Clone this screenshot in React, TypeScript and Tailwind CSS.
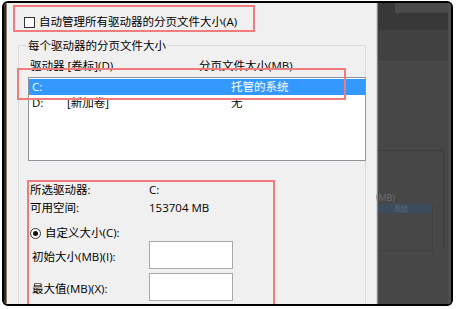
import React from "react";

// Windows "virtual memory" dialog, partly covered, with red callouts
const Checkbox: React.FC = () => (
    <span className="block w-[11px] h-[11px] shrink-0 border border-[#333333] bg-white" />
);

const Radio: React.FC = () => (
    <span className="flex items-center justify-center w-[11px] h-[11px] shrink-0 rounded-full border border-[#333333] bg-white">
        <span className="block w-[5px] h-[5px] rounded-full bg-[#111111]" />
    </span>
);

const DRIVES = [
    { letter: "C:", label: "", size: "托管的系统", selected: true },
    { letter: "D:", label: "[新加卷]", size: "无", selected: false },
];

export default function App() {
    return (
        <div className="w-[456px] h-[309px] bg-white pt-[1px] pl-[2px] overflow-hidden font-['Open_Sans','Noto_Sans_CJK_SC',sans-serif] text-[11.5px] leading-[16px] text-black">
            <div className="flex w-[451px] h-[305px] border-2 border-black rounded-[6px] overflow-hidden">
                {/* left edge of window behind */}
                <div className="w-[2px] shrink-0 bg-[#2b2b2b]" />
                <div className="w-[1px] shrink-0 bg-[#8c7f6a]" />

                {/* dialog panel */}
                <div className="relative w-[369px] shrink-0 bg-[#f0f0f0] overflow-hidden">
                    {/* auto manage checkbox */}
                    <div className="ml-[6px] mt-[2px] w-[242px] h-[27px] border-2 border-[#f27c7c] flex items-start pl-[9px] pt-[10px] gap-[4px]">
                        <Checkbox />
                        <span className="-mt-[3px] whitespace-nowrap">自动管理所有驱动器的分页文件大小(A)</span>
                    </div>

                    {/* group box */}
                    <div className="relative ml-[11px] mt-[13px] w-[348px] h-[300px] border border-[#dcdcdc]">
                        <span className="absolute -top-[8px] left-[8px] bg-[#f0f0f0] px-[1px] whitespace-nowrap">
                            每个驱动器的分页文件大小
                        </span>

                        {/* column header */}
                        <div className="flex pt-[12px] pl-[11px] whitespace-nowrap">
                            <span className="w-[169px] shrink-0">驱动器 [卷标](D)</span>
                            <span>分页文件大小(MB)</span>
                        </div>

                        {/* drive list */}
                        <div className="ml-[9px] -mr-[1px] mt-[3px] h-[84px] border border-[#8f949c] bg-white pt-[1px]">
                            {DRIVES.map((d) => (
                                <div
                                    key={d.letter}
                                    className={
                                        d.selected
                                            ? "flex h-[16px] pl-[3px] whitespace-nowrap bg-[#3399ff] text-white"
                                            : "flex h-[16px] pl-[3px] whitespace-nowrap"
                                    }
                                >
                                    <span className="w-[35px] shrink-0">{d.letter}</span>
                                    <span className="w-[164px] shrink-0">{d.label}</span>
                                    <span>{d.size}</span>
                                </div>
                            ))}
                        </div>

                        {/* selected drive details */}
                        <div className="ml-[8px] mt-[19px] w-[248px] h-[140px] border-2 border-[#f27c7c] pl-[1px]">
                            <div className="flex whitespace-nowrap">
                                <span className="w-[119px] shrink-0">所选驱动器:</span>
                                <span>C:</span>
                            </div>
                            <div className="flex mt-[2px] whitespace-nowrap">
                                <span className="w-[119px] shrink-0">可用空间:</span>
                                <span>153704 MB</span>
                            </div>
                            <div className="flex items-center gap-[4px] mt-[9px] whitespace-nowrap">
                                <Radio />
                                <span>自定义大小(C):</span>
                            </div>
                            <div className="flex items-center pl-[2px] whitespace-nowrap">
                                <span className="w-[117px] shrink-0 mt-[3px]">初始大小(MB)(I):</span>
                                <div className="w-[84px] h-[28px] border border-[#a9a9a9] bg-white" />
                            </div>
                            <div className="flex items-center pl-[2px] mt-[4px] whitespace-nowrap">
                                <span className="w-[117px] shrink-0 mt-[3px]">最大值(MB)(X):</span>
                                <div className="w-[84px] h-[28px] border border-[#a9a9a9] bg-white" />
                            </div>
                        </div>
                    </div>

                    {/* callout over the selected row */}
                    <div className="absolute left-[10px] top-[65px] w-[329px] h-[32px] border-2 border-[#f27c7c]" />
                </div>

                {/* divider */}
                <div className="w-[1px] shrink-0 bg-[#d6d6d6]" />
                <div className="w-[1px] shrink-0 bg-[#8f8a80]" />

                {/* dimmed background window */}
                <div className="flex-1 flex bg-[#474747]">
                    <div className="flex-1 flex flex-col">
                        <div className="h-[27px] flex bg-[#383838]">
                            <div className="w-[17px]" />
                            <div className="flex-1 h-[10px] bg-[#4a4a4a]" />
                        </div>
                        <div className="h-[32px] bg-[#414141] border-b border-[#4d4d4d]" />
                        <div className="mt-[88px] mr-[4px] h-[99px] border-t border-r border-[#3d3d3d] pt-[42px]">
                            <span className="block h-[10px] text-[9px] leading-[10px] text-[#6e6e6e] -ml-[3px]">\MB)</span>
                            <div className="mr-[10px] mt-[1px] h-[47px] border-r border-b border-[#404040]">
                                <div className="h-[9px] bg-[#3e4d5e] pl-[16px] text-[7px] leading-[9px] text-[#5a6a7a]">系统</div>
                            </div>
                        </div>
                    </div>
                    <div className="w-[3px] shrink-0 bg-[#4d4d4d]" />
                </div>
            </div>
        </div>
    );
}
